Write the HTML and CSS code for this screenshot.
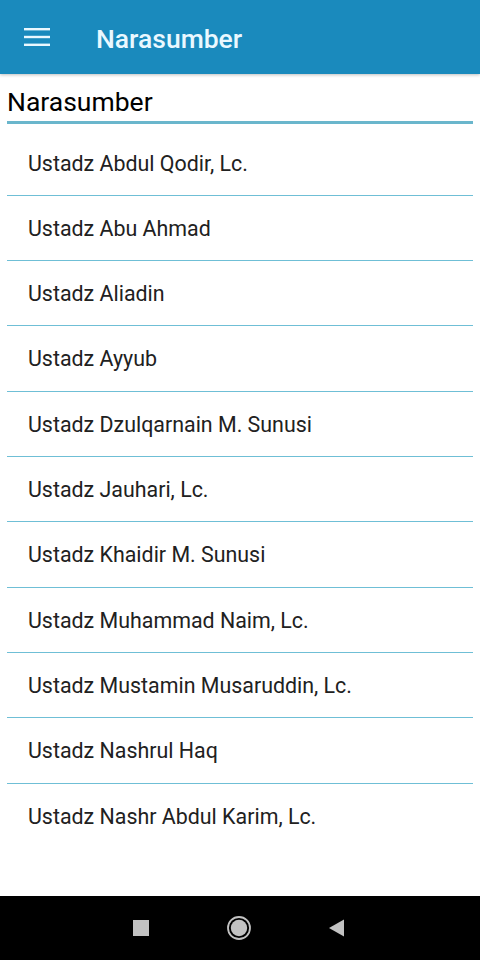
FILE: index.html
```html
<!DOCTYPE html>
<html lang="id">
<head>
    <meta charset="UTF-8">
    <meta name="viewport" content="width=device-width, initial-scale=1.0">
    <title>Narasumber</title>
    <link rel="stylesheet" href="styles.css">
</head>
<body>
    <div class="screen">
        <header class="app-bar">
            <button class="menu-btn" aria-label="Menu">
                <svg width="26" height="18" viewBox="0 0 26 18">
                    <rect x="0" y="0" width="26" height="2.4" fill="#eaf8ff"/>
                    <rect x="0" y="7.8" width="26" height="2.4" fill="#eaf8ff"/>
                    <rect x="0" y="15.6" width="26" height="2.4" fill="#eaf8ff"/>
                </svg>
            </button>
            <h1 class="app-title">Narasumber</h1>
        </header>

        <main class="content">
            <h2 class="section-title">Narasumber</h2>
            <ul class="speaker-list">
                <li>Ustadz Abdul Qodir, Lc.</li>
                <li>Ustadz Abu Ahmad</li>
                <li>Ustadz Aliadin</li>
                <li>Ustadz Ayyub</li>
                <li>Ustadz Dzulqarnain M. Sunusi</li>
                <li>Ustadz Jauhari, Lc.</li>
                <li>Ustadz Khaidir M. Sunusi</li>
                <li>Ustadz Muhammad Naim, Lc.</li>
                <li>Ustadz Mustamin Musaruddin, Lc.</li>
                <li>Ustadz Nashrul Haq</li>
                <li>Ustadz Nashr Abdul Karim, Lc.</li>
            </ul>
        </main>

        <nav class="nav-bar">
            <span class="nav-slot">
                <svg width="18" height="18" viewBox="0 0 18 18">
                    <rect x="1" y="1" width="16" height="16" fill="#c2c2c2"/>
                </svg>
            </span>
            <span class="nav-slot">
                <svg width="26" height="26" viewBox="0 0 26 26">
                    <circle cx="13" cy="13" r="11" fill="none" stroke="#c2c2c2" stroke-width="1.8"/>
                    <circle cx="13" cy="13" r="8.2" fill="#c2c2c2"/>
                </svg>
            </span>
            <span class="nav-slot">
                <svg width="18" height="20" viewBox="0 0 18 20">
                    <polygon points="16,1.5 16,18.5 1,10" fill="#c2c2c2"/>
                </svg>
            </span>
        </nav>
    </div>
</body>
</html>
```

FILE: styles.css
```css
body {
    margin: 0;
    padding: 0;
    font-family: Roboto, "Noto Sans", Arial, sans-serif;
    background-color: #fff;
}
.screen {
    width: 480px;
    height: 960px;
    display: flex;
    flex-direction: column;
    overflow: hidden;
}
.app-bar {
    height: 74px;
    flex-shrink: 0;
    display: flex;
    align-items: center;
    background-color: #1a8abd;
    box-shadow: 0 1px 3px rgba(0, 0, 0, 0.25);
    position: relative;
    z-index: 1;
}
.menu-btn {
    width: 96px;
    height: 74px;
    padding: 0 0 0 24px;
    margin: 0;
    border: none;
    background: none;
    display: flex;
    align-items: center;
    cursor: pointer;
}
.app-title {
    margin: 2px 0 0 0;
    font-size: 26.5px;
    font-weight: 500;
    color: #eaf8ff;
}
.content {
    flex: 1;
    padding: 0 7px;
}
.section-title {
    margin: 0;
    padding-top: 13px;
    height: 34px;
    font-size: 26.5px;
    font-weight: 400;
    line-height: 30px;
    color: #000;
    border-bottom: 3px solid #6ab6cc;
}
.speaker-list {
    list-style: none;
    margin: 7px 0 0 0;
    padding: 0;
}
.speaker-list li {
    box-sizing: border-box;
    height: 65px;
    display: flex;
    align-items: center;
    padding: 0 0 0 21px;
    font-size: 21.4px;
    color: #212121;
    border-bottom: 1px solid #6fbfd6;
}
.speaker-list li:nth-child(3n+1):not(:first-child) {
    height: 66px;
}
.speaker-list li:last-child {
    border-bottom: none;
}
.nav-bar {
    height: 64px;
    flex-shrink: 0;
    background-color: #000;
    display: flex;
    align-items: center;
    justify-content: center;
    padding-right: 3px;
}
.nav-slot {
    width: 98px;
    display: flex;
    justify-content: center;
    align-items: center;
}
```
